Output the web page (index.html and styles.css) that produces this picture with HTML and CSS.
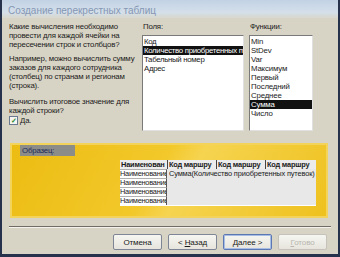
FILE: index.html
```html
<!DOCTYPE html>
<html lang="ru">
<head>
    <meta charset="UTF-8">
    <title>Создание перекрестных таблиц</title>
    <link rel="stylesheet" href="styles.css">
</head>
<body>
    <div class="window">
        <div class="titlebar">Создание перекрестных таблиц</div>

        <div class="content">
            <div class="top">
                <div class="intro">
                    <p class="question">Какие вычисления необходимо провести для каждой ячейки на пересечении строк и столбцов?</p>
                    <p class="example">Например, можно вычислить сумму заказов для каждого сотрудника (столбец) по странам и регионам (строка).</p>
                    <p>Вычислить итоговое значение для каждой строки?</p>
                    <label class="check"><span class="box">&#10003;</span><span><u>Д</u>а.</span></label>
                </div>

                <div class="field-col">
                    <div class="caption">Поля:</div>
                    <div class="list">
                        <div class="item">Код</div>
                        <div class="item selected">Количество приобретенных путевок</div>
                        <div class="item">Табельный номер</div>
                        <div class="item">Адрес</div>
                    </div>
                </div>

                <div class="func-col">
                    <div class="caption">Функции:</div>
                    <div class="list">
                        <div class="item">Min</div>
                        <div class="item">StDev</div>
                        <div class="item">Var</div>
                        <div class="item">Максимум</div>
                        <div class="item">Первый</div>
                        <div class="item">Последний</div>
                        <div class="item">Среднее</div>
                        <div class="item selected">Сумма</div>
                        <div class="item">Число</div>
                    </div>
                </div>
            </div>

            <!-- Sample -->
            <div class="sample">
                <div class="sample-label">Образец:</div>
                <div class="grid">
                    <div class="head first">Наименован</div>
                    <div class="head">Код маршру</div>
                    <div class="head">Код маршру</div>
                    <div class="head">Код маршру</div>

                    <div class="rowname">Наименование</div>
                    <div class="values">Сумма(Количество приобретенных путевок)</div>
                    <div class="rowname">Наименование</div>
                    <div class="rowname">Наименование</div>
                    <div class="rowname">Наименование</div>
                </div>
            </div>

            <div class="separator"></div>

            <div class="buttons">
                <button class="btn">Отмена</button>
                <button class="btn">&lt; <u>Н</u>азад</button>
                <button class="btn default"><u>Д</u>алее &gt;</button>
                <button class="btn" disabled><u>Г</u>отово</button>
            </div>
        </div>
    </div>
</body>
</html>
```

FILE: styles.css
```css
body {
    margin: 0;
    font-family: "Liberation Sans", Arial, sans-serif;
    font-size: 7.8px;
    letter-spacing: -0.15px;
    color: #1a1a1a;
    background: #2a3550;
}
.window {
    width: 340px;
    height: 257px;
    box-sizing: border-box;
    border: 2px solid #26314c;
    border-top: none;
    border-bottom-width: 3px;
    background: #d8d4c5;
    display: flex;
    flex-direction: column;
    overflow: hidden;
}
.titlebar {
    height: 18px;
    line-height: 21px;
    padding-left: 6px;
    font-size: 10px;
    letter-spacing: 0;
    color: #8597b4;
    background: linear-gradient(180deg, #c2d2e4, #d4dfea 70%, #d8d8cc);
}
.content {
    flex: 1;
    display: flex;
    flex-direction: column;
    padding: 4px 0 0 7px;
}
.top {
    display: flex;
    height: 113px;
}
.intro {
    width: 130px;
    line-height: 9px;
}
.intro p {
    margin: 0;
}
.intro .question {
    margin-bottom: 5px;
}
.intro .example {
    margin-bottom: 7px;
}
.check {
    display: flex;
    align-items: center;
    gap: 2px;
    margin-top: 1px;
}
.box {
    width: 7px;
    height: 7px;
    border: 1px solid #6a7890;
    background: #f4f4f0;
    color: #2a8a2a;
    font-size: 7px;
    line-height: 7px;
    text-align: center;
    font-weight: bold;
}
.field-col {
    width: 102px;
    margin-left: 3px;
}
.func-col {
    width: 64px;
    margin-left: 5px;
}
.caption {
    height: 13px;
    line-height: 9px;
    padding-left: 1px;
}
.list {
    height: 96px;
    box-sizing: border-box;
    background: #fff;
    border: 1px solid #7a7a7a;
    border-right-color: #e0e0e0;
    border-bottom-color: #e0e0e0;
    padding-top: 1px;
    overflow: hidden;
}
.item {
    height: 9px;
    line-height: 9px;
    padding-left: 1px;
    white-space: nowrap;
    overflow: hidden;
}
.field-col .item {
    letter-spacing: -0.3px;
}
.item.selected {
    background: #111;
    color: #fff;
}
.sample {
    margin: 8px 0 0 1px;
    width: 318px;
    height: 75px;
    box-sizing: border-box;
    border: 2px solid #f3d35a;
    background: linear-gradient(120deg, #ecbc12, #f2c82a 45%, #f6d450 55%, #eec11e);
    position: relative;
}
.sample-label {
    position: absolute;
    left: 8px;
    top: 0;
    width: 55px;
    height: 11px;
    line-height: 11px;
    background: #8c8c88;
    color: #1c2a58;
    padding-left: 2px;
    box-sizing: border-box;
}
.grid {
    position: absolute;
    left: 108px;
    top: 15px;
    width: 196px;
    display: grid;
    grid-template-columns: 47px 49px 49px 1fr;
    grid-auto-rows: 9px;
    background: #e8e8e8;
    border-bottom: 1px solid #fff;
    font-size: 7.4px;
}
.head {
    font-weight: bold;
    line-height: 9px;
    white-space: nowrap;
    overflow: hidden;
    background: #ececec;
    border-left: 1px solid #444;
    padding-left: 1px;
    letter-spacing: -0.2px;
}
.head.first {
    border-left: none;
}
.rowname {
    grid-column: 1;
    line-height: 8px;
    background: #fff;
    border-top: 1px solid #b0b0b0;
    border-right: 1px solid #555;
    white-space: nowrap;
    overflow: hidden;
    box-sizing: border-box;
    letter-spacing: -0.25px;
}
.values {
    grid-column: 2 / 5;
    grid-row: 2 / 6;
    line-height: 9px;
    padding-left: 2px;
    white-space: nowrap;
}
.separator {
    margin: 8px 7px 0 0;
    height: 1px;
    background: #6e6c64;
    border-bottom: 1px solid #f4f2ea;
}
.buttons {
    display: flex;
    justify-content: flex-end;
    gap: 6px;
    padding: 6px 11px 0 0;
}
.btn {
    width: 49px;
    height: 16px;
    padding: 0;
    font-family: inherit;
    font-size: 8px;
    letter-spacing: -0.1px;
    color: #1a1a1a;
    border: 1px solid #7e8696;
    border-radius: 2px;
    background: linear-gradient(180deg, #f6f6f2, #e6e4dc);
}
.btn.default {
    border-color: #5c78b4;
    box-shadow: inset 0 0 0 1px #a8bde4;
}
.btn:disabled {
    color: #b8b6ae;
    border-color: #c4c2ba;
}
```
